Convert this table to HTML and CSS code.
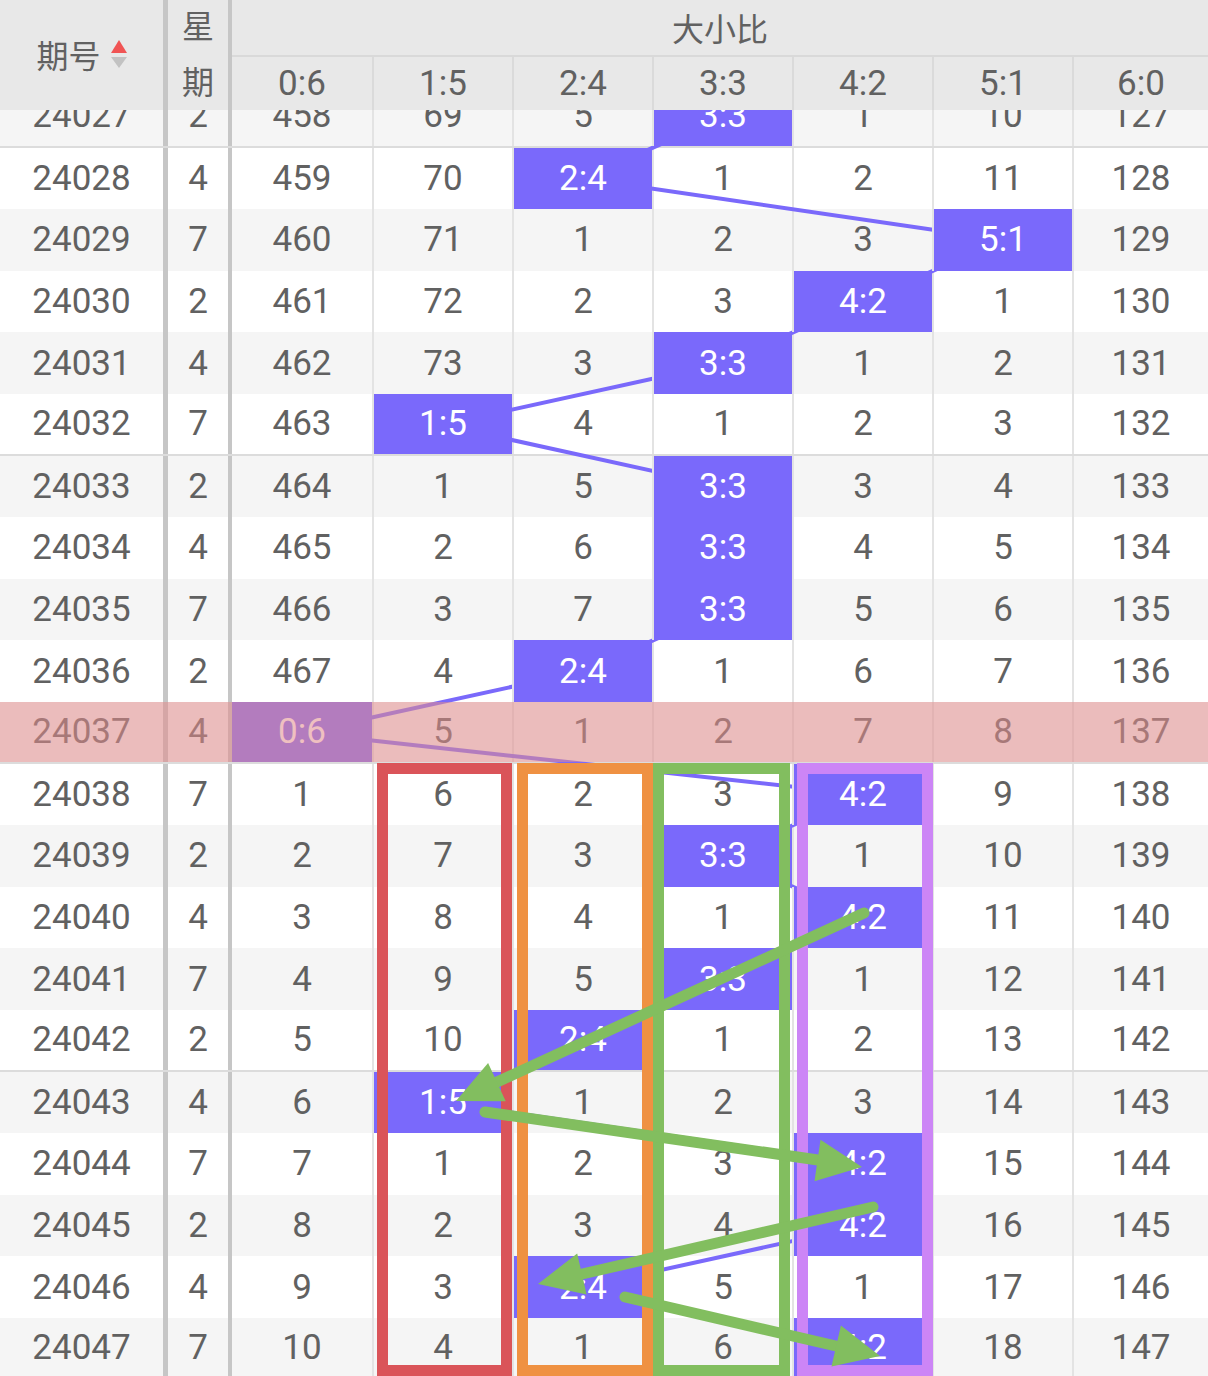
FILE: index.html
```html
<!DOCTYPE html>
<html lang="zh-CN">
<head>
<meta charset="utf-8">
<title>大小比走势</title>
<link rel="stylesheet" href="styles.css">
</head>
<body>
<div class="page">
  <div class="header">
    <div class="h-id"><span>期号</span>
      <svg class="sort" width="16" height="30" viewBox="0 0 16 30"><polygon points="8,0 16,13 0,13" fill="#f05454"/><polygon points="0,17 16,17 8,28" fill="#c2c2c2"/></svg>
    </div>
    <div class="h-week"><span>星</span><span>期</span></div>
    <div class="h-group">大小比</div>
    <div class="h-ratio">0:6</div>
    <div class="h-ratio">1:5</div>
    <div class="h-ratio">2:4</div>
    <div class="h-ratio">3:3</div>
    <div class="h-ratio">4:2</div>
    <div class="h-ratio">5:1</div>
    <div class="h-ratio">6:0</div>
  </div>
  <div class="viewport">
    <div class="rows">
      <svg class="trend" width="1208" height="1294" viewBox="0 0 1208 1294">
        <polyline points="723,30.8 583,92.4 1003,154 863,215.6 723,277.2 443,338.8 723,400.4 723,462 723,523.6 583,585.2 302,646.8 863,708.4 723,770 863,831.6 723,893.2 583,954.8 443,1016.4 863,1078 863,1139.6 583,1201.2 863,1262.8"/>
      </svg>
      <div class="row alt sep"><div class="c id">24027</div><div class="c wk">2</div><div class="c r">458</div><div class="c r">69</div><div class="c r">5</div><div class="c r hit">3:3</div><div class="c r">1</div><div class="c r">10</div><div class="c r">127</div></div>
      <div class="row"><div class="c id">24028</div><div class="c wk">4</div><div class="c r">459</div><div class="c r">70</div><div class="c r hit">2:4</div><div class="c r">1</div><div class="c r">2</div><div class="c r">11</div><div class="c r">128</div></div>
      <div class="row alt"><div class="c id">24029</div><div class="c wk">7</div><div class="c r">460</div><div class="c r">71</div><div class="c r">1</div><div class="c r">2</div><div class="c r">3</div><div class="c r hit">5:1</div><div class="c r">129</div></div>
      <div class="row"><div class="c id">24030</div><div class="c wk">2</div><div class="c r">461</div><div class="c r">72</div><div class="c r">2</div><div class="c r">3</div><div class="c r hit">4:2</div><div class="c r">1</div><div class="c r">130</div></div>
      <div class="row alt"><div class="c id">24031</div><div class="c wk">4</div><div class="c r">462</div><div class="c r">73</div><div class="c r">3</div><div class="c r hit">3:3</div><div class="c r">1</div><div class="c r">2</div><div class="c r">131</div></div>
      <div class="row sep"><div class="c id">24032</div><div class="c wk">7</div><div class="c r">463</div><div class="c r hit">1:5</div><div class="c r">4</div><div class="c r">1</div><div class="c r">2</div><div class="c r">3</div><div class="c r">132</div></div>
      <div class="row alt"><div class="c id">24033</div><div class="c wk">2</div><div class="c r">464</div><div class="c r">1</div><div class="c r">5</div><div class="c r hit">3:3</div><div class="c r">3</div><div class="c r">4</div><div class="c r">133</div></div>
      <div class="row"><div class="c id">24034</div><div class="c wk">4</div><div class="c r">465</div><div class="c r">2</div><div class="c r">6</div><div class="c r hit">3:3</div><div class="c r">4</div><div class="c r">5</div><div class="c r">134</div></div>
      <div class="row alt"><div class="c id">24035</div><div class="c wk">7</div><div class="c r">466</div><div class="c r">3</div><div class="c r">7</div><div class="c r hit">3:3</div><div class="c r">5</div><div class="c r">6</div><div class="c r">135</div></div>
      <div class="row"><div class="c id">24036</div><div class="c wk">2</div><div class="c r">467</div><div class="c r">4</div><div class="c r hit">2:4</div><div class="c r">1</div><div class="c r">6</div><div class="c r">7</div><div class="c r">136</div></div>
      <div class="row alt sep cur"><div class="c id">24037</div><div class="c wk">4</div><div class="c r hit">0:6</div><div class="c r">5</div><div class="c r">1</div><div class="c r">2</div><div class="c r">7</div><div class="c r">8</div><div class="c r">137</div></div>
      <div class="row"><div class="c id">24038</div><div class="c wk">7</div><div class="c r">1</div><div class="c r">6</div><div class="c r">2</div><div class="c r">3</div><div class="c r hit">4:2</div><div class="c r">9</div><div class="c r">138</div></div>
      <div class="row alt"><div class="c id">24039</div><div class="c wk">2</div><div class="c r">2</div><div class="c r">7</div><div class="c r">3</div><div class="c r hit">3:3</div><div class="c r">1</div><div class="c r">10</div><div class="c r">139</div></div>
      <div class="row"><div class="c id">24040</div><div class="c wk">4</div><div class="c r">3</div><div class="c r">8</div><div class="c r">4</div><div class="c r">1</div><div class="c r hit">4:2</div><div class="c r">11</div><div class="c r">140</div></div>
      <div class="row alt"><div class="c id">24041</div><div class="c wk">7</div><div class="c r">4</div><div class="c r">9</div><div class="c r">5</div><div class="c r hit">3:3</div><div class="c r">1</div><div class="c r">12</div><div class="c r">141</div></div>
      <div class="row sep"><div class="c id">24042</div><div class="c wk">2</div><div class="c r">5</div><div class="c r">10</div><div class="c r hit">2:4</div><div class="c r">1</div><div class="c r">2</div><div class="c r">13</div><div class="c r">142</div></div>
      <div class="row alt"><div class="c id">24043</div><div class="c wk">4</div><div class="c r">6</div><div class="c r hit">1:5</div><div class="c r">1</div><div class="c r">2</div><div class="c r">3</div><div class="c r">14</div><div class="c r">143</div></div>
      <div class="row"><div class="c id">24044</div><div class="c wk">7</div><div class="c r">7</div><div class="c r">1</div><div class="c r">2</div><div class="c r">3</div><div class="c r hit">4:2</div><div class="c r">15</div><div class="c r">144</div></div>
      <div class="row alt"><div class="c id">24045</div><div class="c wk">2</div><div class="c r">8</div><div class="c r">2</div><div class="c r">3</div><div class="c r">4</div><div class="c r hit">4:2</div><div class="c r">16</div><div class="c r">145</div></div>
      <div class="row"><div class="c id">24046</div><div class="c wk">4</div><div class="c r">9</div><div class="c r">3</div><div class="c r hit">2:4</div><div class="c r">5</div><div class="c r">1</div><div class="c r">17</div><div class="c r">146</div></div>
      <div class="row alt sep"><div class="c id">24047</div><div class="c wk">7</div><div class="c r">10</div><div class="c r">4</div><div class="c r">1</div><div class="c r">6</div><div class="c r hit">4:2</div><div class="c r">18</div><div class="c r">147</div></div>
    </div>
  </div>
  <svg class="marks" width="1208" height="1376" viewBox="0 0 1208 1376">
    <g fill="none" stroke-width="11">
      <rect x="382.5" y="768.5" width="124" height="602" stroke="#da5459"/>
      <rect x="522.5" y="768.5" width="125" height="602" stroke="#ef9142"/>
      <rect x="658.5" y="768.5" width="126" height="602" stroke="#82be5f"/>
      <rect x="802.5" y="768.5" width="125" height="602" stroke="#cc85f6"/>
    </g>
    <g stroke="#82be5f" stroke-width="11" stroke-linecap="round" fill="#82be5f">
      <line x1="864" y1="913" x2="497" y2="1082"/>
      <polygon stroke="none" points="456,1101 505.7,1101.3 488.1,1063.1"/>
      <line x1="485" y1="1112" x2="818" y2="1160"/>
      <polygon stroke="none" points="862,1167 814.5,1181.3 820.5,1139.7"/>
      <line x1="873" y1="1207" x2="582" y2="1274"/>
      <polygon stroke="none" points="538,1284 586.6,1294.4 577.2,1253.4"/>
      <line x1="625" y1="1297" x2="836" y2="1346"/>
      <polygon stroke="none" points="880,1356 831.5,1366.4 840.9,1325.4"/>
    </g>
  </svg>
</div>
</body>
</html>
```
FILE: styles.css
```css
html, body {
  margin: 0;
  padding: 0;
  background: #ffffff;
}

body {
  font-family: Roboto, "Noto Sans CJK SC", sans-serif;
  color: #616161;
}

.page {
  position: relative;
  width: 1208px;
  height: 1376px;
  overflow: hidden;
}

/* ---------- header ---------- */
.header {
  display: grid;
  grid-template-columns: 168px 64px repeat(6, 140px) 1fr;
  grid-template-rows: 57px 53px;
  height: 110px;
  background: #e8e8e8;
}

.h-id {
  grid-row: 1 / span 2;
  grid-column: 1;
  box-sizing: border-box;
  border-right: 5px solid #c6c6c6;
  display: flex;
  align-items: center;
  justify-content: center;
  gap: 10px;
  font-family: "Noto Sans CJK SC", sans-serif;
  font-size: 32px;
  padding-bottom: 2px;
}

.sort {
  display: block;
  margin-top: 2px;
}

.h-week {
  grid-row: 1 / span 2;
  grid-column: 2;
  box-sizing: border-box;
  border-right: 4px solid #c6c6c6;
  display: flex;
  flex-direction: column;
  align-items: center;
  gap: 23px;
  padding-top: 8px;
  font-family: "Noto Sans CJK SC", sans-serif;
  font-size: 32px;
  line-height: 33px;
}

.h-group {
  grid-row: 1;
  grid-column: 3 / -1;
  box-sizing: border-box;
  border-bottom: 2px solid #d9d9d9;
  display: flex;
  align-items: center;
  justify-content: center;
  font-family: "Noto Sans CJK SC", sans-serif;
  font-size: 32px;
  padding-bottom: 2px;
}

.h-ratio {
  grid-row: 2;
  box-sizing: border-box;
  display: flex;
  align-items: center;
  justify-content: center;
  font-size: 35px;
}

.h-ratio + .h-ratio {
  border-left: 2px solid #dadada;
}

/* ---------- body ---------- */
.viewport {
  height: 1266px;
  overflow: hidden;
}

.rows {
  position: relative;
  margin-top: -24px;
}

.trend {
  position: absolute;
  left: 0;
  top: 0;
  z-index: 1;
  pointer-events: none;
}

.trend polyline {
  fill: none;
  stroke: #7a69fb;
  stroke-width: 4;
  stroke-linejoin: round;
}

.row {
  display: grid;
  grid-template-columns: 168px 64px repeat(6, 140px) 1fr;
  height: 61.6px;
  box-sizing: border-box;
  background: #ffffff;
}

.row.alt {
  background: #f5f5f5;
}

.row.sep {
  border-bottom: 2px solid #dcdcdc;
}

.row.cur {
  position: relative;
}

.row.cur::after {
  content: "";
  position: absolute;
  left: 0;
  right: 0;
  top: 0;
  bottom: 0;
  background: rgba(226, 140, 140, 0.55);
  z-index: 3;
}

.c {
  display: flex;
  align-items: center;
  justify-content: center;
  font-size: 35px;
  box-sizing: border-box;
}

.c.id {
  border-right: 5px solid #c6c6c6;
}

.c.wk {
  border-right: 4px solid #c6c6c6;
}

.c.r + .c.r {
  border-left: 2px solid #e3e3e3;
}

.c.hit {
  position: relative;
  z-index: 2;
  background: #7a69fb;
  color: #ffffff;
}

/* ---------- hand-drawn annotations ---------- */
.marks {
  position: absolute;
  left: 0;
  top: 0;
  z-index: 10;
  pointer-events: none;
}
```
